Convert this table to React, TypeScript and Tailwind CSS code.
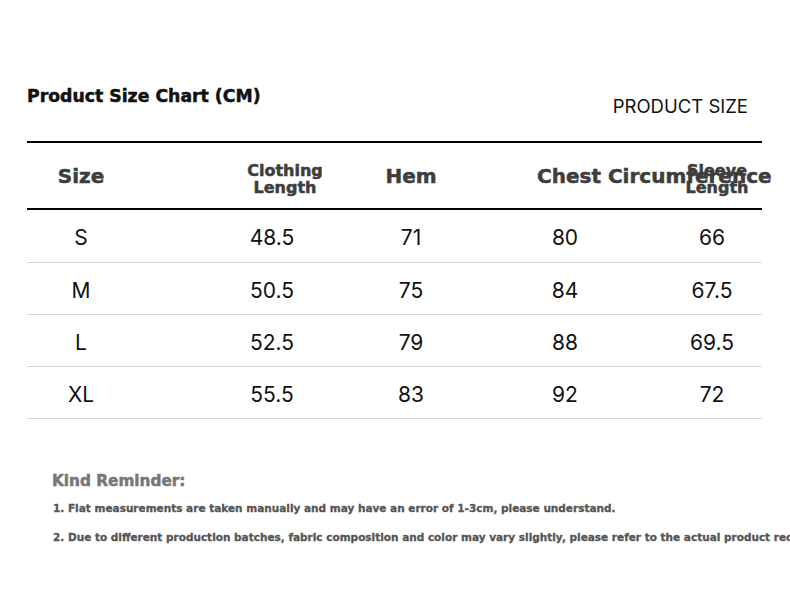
import React from 'react';

const ROWS = [
  ['S', '48.5', '71', '80', '66'],
  ['M', '50.5', '75', '84', '67.5'],
  ['L', '52.5', '79', '88', '69.5'],
  ['XL', '55.5', '83', '92', '72'],
];

const heavy = "font-['DejaVu_Sans',sans-serif] font-bold [-webkit-text-stroke:0.5px_currentColor]";
const plain = "font-['Inter','Noto_Sans',sans-serif]";

export default function App() {
  return (
    <div className="w-[790px] h-[606px] overflow-hidden bg-white">
      {/* title row */}
      <div className="flex justify-between pt-[86px] pl-[27px] pr-[42px]">
        <div className={`${heavy} text-[17.3px] leading-[20px] text-[#111] whitespace-nowrap`}>
          Product Size Chart (CM)
        </div>
        <div className={`${plain} text-[18.5px] leading-[22px] text-[#111] mt-[9px] whitespace-nowrap`}>
          PRODUCT SIZE
        </div>
      </div>

      {/* table */}
      <div className="ml-[27px] w-[735px] mt-[24px] border-t-2 border-black">
        <div className={`${heavy} flex items-center h-[67px] border-b-2 border-black text-[#3d3d3d] whitespace-nowrap`}>
          <div className="w-[108px] text-center text-[20px]">Size</div>
          <div className="ml-[100px] w-[100px] mt-[7px] text-center text-[16px] leading-[17px]">
            Clothing
            <br />
            Length
          </div>
          <div className="ml-[26px] w-[100px] text-center text-[20px]">Hem</div>
          <div className="ml-[76px] w-[120px] text-left text-[20px]">Chest Circumference</div>
          <div className="ml-[20px] w-[80px] mt-[7px] text-center text-[16px] leading-[17px]">
            Sleeve
            <br />
            Length
          </div>
        </div>
        {ROWS.map((row, i) => (
          <div
            key={row[0]}
            className={`${plain} flex items-center ${i === 0 ? 'h-[53px]' : 'h-[52px]'} pt-[4px] border-b border-[#d6d6d6] text-[21px] text-[#111]`}
          >
            <div className="w-[108px] text-center">{row[0]}</div>
            <div className="ml-[87px] w-[100px] text-center">{row[1]}</div>
            <div className="ml-[39px] w-[100px] text-center">{row[2]}</div>
            <div className="ml-[54px] w-[100px] text-center">{row[3]}</div>
            <div className="ml-[47px] w-[100px] text-center">{row[4]}</div>
          </div>
        ))}
      </div>

      {/* reminder */}
      <div className={`${heavy} pl-[52px] mt-[52px] whitespace-nowrap`}>
        <div className="text-[15.3px] leading-[20px] text-[#777]">Kind Reminder:</div>
        <div className="mt-[10px] text-[10.5px] leading-[14px] text-[#555] pl-px [-webkit-text-stroke:0.3px_currentColor]">
          1. Flat measurements are taken manually and may have an error of 1-3cm, please understand.
        </div>
        <div className="mt-[15px] text-[10.5px] leading-[14px] text-[#555] pl-px [-webkit-text-stroke:0.3px_currentColor]">
          2. Due to different production batches, fabric composition and color may vary slightly, please refer to the actual product received.
        </div>
      </div>
    </div>
  );
}
